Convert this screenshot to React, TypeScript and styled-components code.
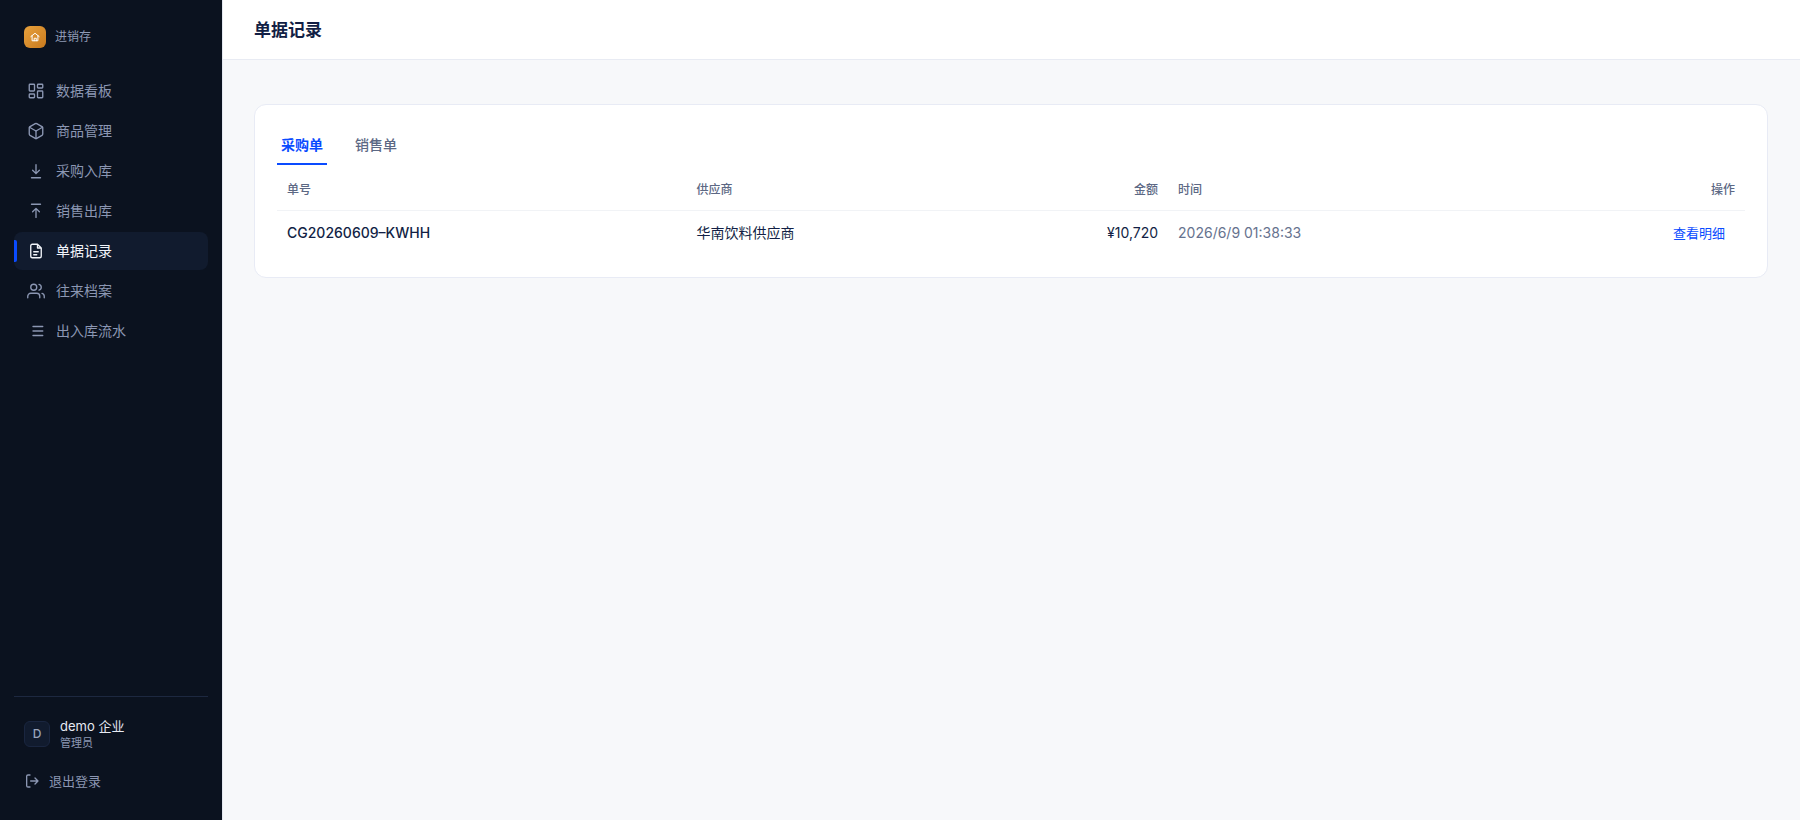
import React from "react";
import styled, { createGlobalStyle } from "styled-components";
import { Box, LayoutDashboard } from "lucide-react";

const GlobalStyle = createGlobalStyle`
  *, *::before, *::after { box-sizing: border-box; }
  body {
    margin: 0;
    background: #f7f8fa;
    color: #121f45;
    font-family: Inter, "Noto Sans CJK SC", sans-serif;
    font-size: 14px;
    line-height: 20px;
  }
  button { font: inherit; border: 0; background: none; cursor: pointer; }
`;

const Shell = styled.div`
  display: flex;
  min-height: 100vh;
`;

const Sidebar = styled.aside`
  display: flex;
  flex-direction: column;
  flex: none;
  width: 222px;
  padding: 20px 14px 21px;
  background: #0b121f;
  box-shadow: 1px 0 0 #e4e8f0;
  z-index: 1;
`;

const Brand = styled.div`
  display: flex;
  align-items: center;
  gap: 9px;
  height: 34px;
  margin-bottom: 18px;
  padding: 0 10px;
  color: #8f9ab5;
  font-size: 12px;
`;

const BrandMark = styled.span`
  display: grid;
  place-items: center;
  width: 22px;
  height: 22px;
  border-radius: 6px;
  background: linear-gradient(135deg, #e8a13c, #c97a1e);
  color: #fff;
`;

const Nav = styled.nav`
  display: flex;
  flex-direction: column;
  gap: 2px;
`;

const NavLink = styled.a<{ $active?: boolean }>`
  position: relative;
  display: flex;
  align-items: center;
  gap: 11px;
  height: 38px;
  padding: 0 13px;
  border-radius: 8px;
  background: ${(p) => (p.$active ? "#111b2e" : "transparent")};
  color: ${(p) => (p.$active ? "#f1f4fa" : "#8c97b3")};
  text-decoration: none;

  &::before {
    content: "";
    display: ${(p) => (p.$active ? "block" : "none")};
    position: absolute;
    left: 0;
    top: 8px;
    bottom: 8px;
    width: 3px;
    border-radius: 0 2px 2px 0;
    background: #0a4bff;
  }
`;

const IconSlot = styled.span`
  display: grid;
  place-items: center;
  width: 18px;
  height: 18px;

  svg { overflow: visible; }
`;

const Account = styled.div`
  margin-top: auto;
  padding: 20px 10px 0;
  border-top: 1px solid #1d2840;
`;

const Profile = styled.div`
  display: flex;
  align-items: center;
  gap: 10px;
`;

const Avatar = styled.span`
  display: grid;
  place-items: center;
  width: 26px;
  height: 26px;
  border: 1px solid #1a2640;
  border-radius: 6px;
  background: #111b2e;
  color: #9aa4ba;
  font-size: 12px;
  font-weight: 500;
`;

const ProfileName = styled.div`
  color: #e6eaf3;
  font-size: 13px;
  line-height: 18px;
`;

const ProfileRole = styled.div`
  color: #8c97b3;
  font-size: 11px;
  line-height: 16px;
`;

const Logout = styled.button`
  display: flex;
  align-items: center;
  gap: 9px;
  margin-top: 12px;
  padding: 8px 0;
  color: #8c97b3;
  font-size: 13px;
`;

const Main = styled.main`
  flex: 1;
  min-width: 0;
`;

const Header = styled.header`
  display: flex;
  align-items: center;
  height: 60px;
  padding: 0 32px;
  background: #fff;
  border-bottom: 1px solid #e8ebf3;
`;

const Title = styled.h1`
  margin: 0;
  font-size: 17px;
  font-weight: 600;
  line-height: 24px;
`;

const Card = styled.section`
  margin: 44px 32px;
  padding: 22px;
  background: #fff;
  border: 1px solid #e8ebf5;
  border-radius: 12px;
`;

const Tabs = styled.div`
  display: flex;
  gap: 24px;
`;

const Tab = styled.button<{ $active?: boolean }>`
  height: 38px;
  padding: 0 4px;
  border-bottom: 2px solid ${(p) => (p.$active ? "#0a4bff" : "transparent")};
  color: ${(p) => (p.$active ? "#0a4bff" : "#5c6884")};
  font-weight: ${(p) => (p.$active ? 600 : 500)};
`;

const Table = styled.table`
  width: 100%;
  border-collapse: collapse;
  table-layout: fixed;
`;

const HeadCell = styled.th<{ $end?: boolean }>`
  height: 45px;
  padding: 6px 10px 0;
  border-bottom: 1px solid #f1f3f6;
  color: #5c6884;
  font-size: 12px;
  font-weight: 500;
  text-align: ${(p) => (p.$end ? "right" : "left")};
`;

const Cell = styled.td<{ $end?: boolean; $strong?: boolean; $muted?: boolean }>`
  height: 45px;
  padding: 0 10px;
  color: ${(p) => (p.$muted ? "#66728e" : "#121f45")};
  font-weight: ${(p) => (p.$strong ? 500 : 400)};
  text-align: ${(p) => (p.$end ? "right" : "left")};
`;

const DetailButton = styled.button`
  padding: 4px 10px;
  color: #0a4bff;
  font-size: 13px;
`;

type IconProps = { size?: number; strokeWidth?: number };

const lineIcon = (d: string) =>
  function LineIcon({ size = 18, strokeWidth = 1.8 }: IconProps) {
    return (
      <svg
        width={size}
        height={size}
        viewBox="0 0 24 24"
        fill="none"
        stroke="currentColor"
        strokeWidth={strokeWidth}
        strokeLinecap="round"
        strokeLinejoin="round"
        aria-hidden="true"
      >
        <path d={d} />
      </svg>
    );
  };

const InboundIcon = lineIcon("M12 3.5v12M7.5 11l4.5 4.5 4.5-4.5M6 21h12");
const OutboundIcon = lineIcon("M12 20.5v-12M7.5 13 12 8.5l4.5 4.5M6 3h12");
const DocumentIcon = lineIcon(
  "M14 3H7a2 2 0 0 0-2 2v14a2 2 0 0 0 2 2h10a2 2 0 0 0 2-2V8zM14 3v5h5M9 13h6M9 17h4"
);
const PeopleIcon = lineIcon(
  "M17 21v-2a4 4 0 0 0-4-4H5a4 4 0 0 0-4 4v2M9 3a4 4 0 1 0 0 8 4 4 0 0 0 0-8M23 21v-2a4 4 0 0 0-3-3.87M16 3.13a4 4 0 0 1 0 7.75"
);
const ListIcon = lineIcon("M8 6h13M8 12h13M8 18h13");
const LogoutIcon = lineIcon("M9 21H6a2 2 0 0 1-2-2V5a2 2 0 0 1 2-2h3M16.5 16.5 21 12l-4.5-4.5M21 12H10");
const HouseIcon = lineIcon("M2 11 12 3l10 8M5 9v12h14V9M10 21v-6h5v6");

const navItems = [
  { label: "数据看板", icon: LayoutDashboard },
  { label: "商品管理", icon: Box },
  { label: "采购入库", icon: InboundIcon },
  { label: "销售出库", icon: OutboundIcon },
  { label: "单据记录", icon: DocumentIcon, active: true },
  { label: "往来档案", icon: PeopleIcon },
  { label: "出入库流水", icon: ListIcon },
];

const orders = [
  { no: "CG20260609–KWHH", supplier: "华南饮料供应商", amount: "¥10,720", time: "2026/6/9 01:38:33" },
];

export default function App() {
  return (
    <>
      <GlobalStyle />
      <Shell>
        <Sidebar>
          <Brand>
            <BrandMark><HouseIcon size={10} strokeWidth={2.4} /></BrandMark>
            进销存
          </Brand>
          <Nav>
            {navItems.map(({ label, icon: Icon, active }) => (
              <NavLink key={label} href="#" $active={active} aria-current={active ? "page" : undefined}>
                <IconSlot><Icon size={18} strokeWidth={1.8} /></IconSlot>
                {label}
              </NavLink>
            ))}
          </Nav>
          <Account>
            <Profile>
              <Avatar>D</Avatar>
              <div>
                <ProfileName>demo 企业</ProfileName>
                <ProfileRole>管理员</ProfileRole>
              </div>
            </Profile>
            <Logout type="button"><LogoutIcon size={16} strokeWidth={2} />退出登录</Logout>
          </Account>
        </Sidebar>
        <Main>
          <Header><Title>单据记录</Title></Header>
          <Card>
            <Tabs role="tablist">
              <Tab type="button" role="tab" aria-selected="true" $active>采购单</Tab>
              <Tab type="button" role="tab" aria-selected="false">销售单</Tab>
            </Tabs>
            <Table>
              <colgroup>
                <col style={{ width: "27.9%" }} />
                <col style={{ width: "20%" }} />
                <col style={{ width: "12.8%" }} />
                <col style={{ width: "26%" }} />
                <col />
              </colgroup>
              <thead>
                <tr>
                  <HeadCell scope="col">单号</HeadCell>
                  <HeadCell scope="col">供应商</HeadCell>
                  <HeadCell scope="col" $end>金额</HeadCell>
                  <HeadCell scope="col">时间</HeadCell>
                  <HeadCell scope="col" $end>操作</HeadCell>
                </tr>
              </thead>
              <tbody>
                {orders.map((o) => (
                  <tr key={o.no}>
                    <Cell $strong>{o.no}</Cell>
                    <Cell>{o.supplier}</Cell>
                    <Cell $end>{o.amount}</Cell>
                    <Cell $muted>{o.time}</Cell>
                    <Cell $end><DetailButton type="button">查看明细</DetailButton></Cell>
                  </tr>
                ))}
              </tbody>
            </Table>
          </Card>
        </Main>
      </Shell>
    </>
  );
}
